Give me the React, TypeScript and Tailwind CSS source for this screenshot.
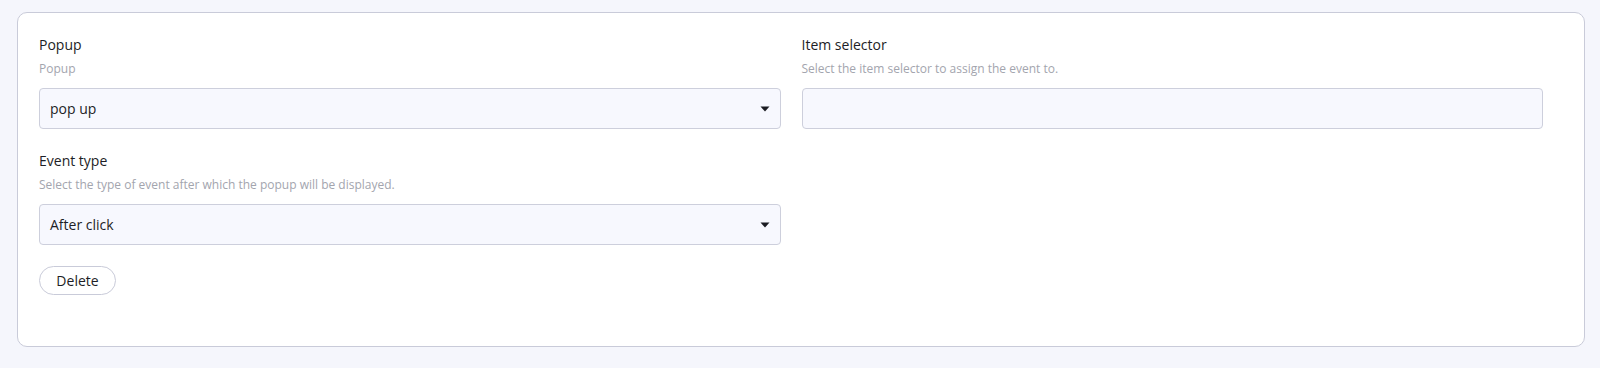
import React from "react";

const Caret = () => (
  <svg width="10" height="6" viewBox="0 0 10 6" className="absolute right-[10px] top-1/2 -translate-y-1/2">
    <path d="M0.5 0.5 L9.5 0.5 L5 5.5 Z" fill="#1b1c22" />
  </svg>
);

function Field({ label, desc, value, select }: { label: string; desc: string; value?: string; select?: boolean }) {
  return (
    <div className="flex flex-col">
      <div className="text-[14px] leading-[20px] text-[#1d1e26] h-[20px] mt-[22px]">{label}</div>
      <div className="text-[12px] leading-[16px] text-[#a3a5ae] mt-[6px]">{desc}</div>
      <div className="relative mt-[11px] h-[41px] rounded-[4px] border border-[#cdcfdc] bg-[#f7f8fe] flex items-center px-[10px] text-[14px] text-[#1d1e26]">
        {value}
        {select && <Caret />}
      </div>
    </div>
  );
}

export default function App() {
  return (
    <div className="w-[1600px] h-[368px] bg-[#f5f6fc] pt-[12px] pl-[17px]" style={{ fontFamily: '"Open Sans", "Liberation Sans", sans-serif' }}>
      <div className="w-[1568px] h-[335px] rounded-[10px] border border-[#c9cbd9] bg-white pl-[21px] pr-[41px]">
        <div className="grid grid-cols-2 gap-x-[21px]">
          <Field label="Popup" desc="Popup" value="pop up" select />
          <Field label="Item selector" desc="Select the item selector to assign the event to." />
          <Field label="Event type" desc="Select the type of event after which the popup will be displayed." value="After click" select />
        </div>
        <button className="mt-[21px] h-[29px] w-[77px] rounded-full border border-[#c9cbd9] bg-white text-[14px] text-[#1d1e26] flex items-center justify-center">
          Delete
        </button>
      </div>
    </div>
  );
}
